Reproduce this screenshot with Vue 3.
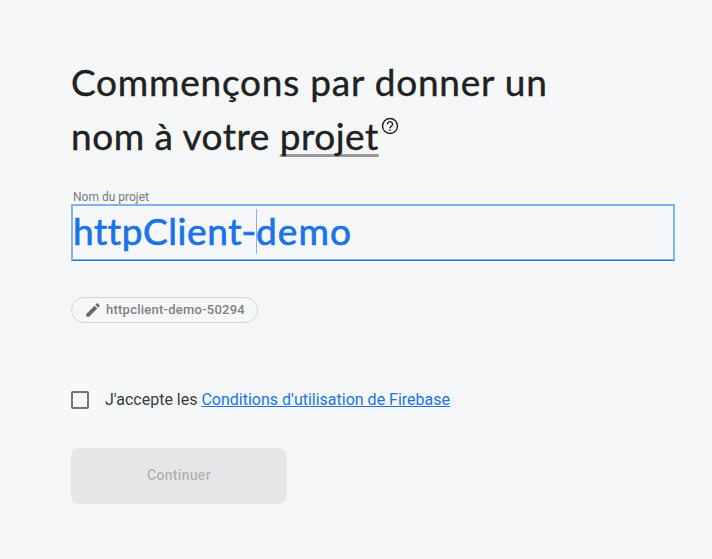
<script setup>
import { ref } from 'vue'
const before = ref('httpClient')
const after = ref('demo')
const projectId = ref('httpclient-demo-50294')
</script>

<template>
  <main class="page">
    <h1 class="title">
      <span class="line first">Commençons par donner un</span>
      <span class="line second"><span class="words">nom à votre </span><span class="term">projet</span><svg class="help" viewBox="0 0 18 18" aria-hidden="true"><circle cx="9" cy="9" r="7.5" /><path d="M6.5 7.2a2.5 2.5 0 1 1 4.2 1.8C9.7 9.8 9 10 9 11.2" /><path d="M9 12.3v1.4" /></svg></span>
    </h1>
    <label class="label">Nom du projet</label>
    <div class="field"><span class="before">{{ before }}<span class="hyphen">-</span></span><i class="caret"></i><span class="after">{{ after }}</span></div>
    <div class="chip">
      <svg class="pencil" viewBox="0 0 24 24" aria-hidden="true"><path d="M3 17.25V21h3.75L17.81 9.94l-3.75-3.75L3 17.25zM20.71 7.04a1 1 0 0 0 0-1.41l-2.34-2.34a1 1 0 0 0-1.41 0l-1.83 1.83 3.75 3.75 1.83-1.83z" /></svg>
      <span class="id">{{ projectId }}</span>
    </div>
    <div class="terms">
      <span class="box"></span>
      <span class="accept">J'accepte les <a class="link">Conditions d'utilisation de Firebase</a></span>
    </div>
    <button class="continue" disabled>Continuer</button>
  </main>
</template>

<style>
body { background: #f6f7f9; }
</style>

<style scoped>
.page {
  box-sizing: border-box;
  height: 559px;
  padding: 55px 37px 0 71px;
  display: flex;
  flex-direction: column;
  align-items: flex-start;
  background: #f6f7f9;
  font-family: Roboto, "Liberation Sans", sans-serif;
}
.title {
  margin: 0;
  font: 400 37px/54px Lato, "Open Sans", sans-serif;
  color: #212121;
  -webkit-text-stroke: 0.4px #212121;
}
.line { display: flex; height: 54px; white-space: pre; }
.first { letter-spacing: 0.77px; }
.second { letter-spacing: 0.5px; }
.term {
  text-decoration: underline #999;
  text-decoration-thickness: 3px;
  text-underline-offset: 4px;
  text-decoration-skip-ink: none;
}
.help { width: 18px; height: 18px; margin: 8px 0 0 2px; fill: none; stroke: #212121; stroke-width: 1.4; }
.label { margin-top: 26px; padding-left: 2px; height: 15px; font-size: 12px; line-height: 16px; color: #77787b; }
.field {
  box-sizing: border-box;
  display: flex;
  width: 604px;
  height: 57px;
  border: 2px solid #82b2f2;
  border-bottom-width: 1px;
  box-shadow: inset 0 -1px #82b2f2;
  border-bottom-color: #1a73e8;
  font: 400 37px/49px Lato, "Open Sans", sans-serif;
  color: #1a73e8;
  -webkit-text-stroke: 0.7px #1a73e8;
}
.before { display: flex; letter-spacing: 0.6px; width: 183px; }
.hyphen { transform: scaleX(1.1); }
.after { letter-spacing: 1.1px; margin-left: -1px; }
.caret { width: 1px; height: 45px; margin-top: 3px; background: #82b2f2; }
.chip {
  box-sizing: border-box;
  display: flex;
  align-items: center;
  width: 187px;
  height: 26px;
  margin-top: 36px;
  padding: 0 0 1px 12px;
  border: 1px solid #d5d7d9;
  border-radius: 13px;
  font-size: 13px;
  font-weight: 500;
  letter-spacing: 0.24px;
  color: #808183;
}
.pencil { width: 18px; height: 18px; margin: 1px 4px 0 0; fill: #6b6c6e; }
.id { white-space: nowrap; }
.terms { display: flex; align-items: center; height: 24px; margin-top: 65px; font-size: 16px; color: #3b3c3e; }
.box { box-sizing: border-box; width: 18px; height: 18px; margin-right: 16px; border: 2px solid #737476; border-radius: 2px; }
.accept { white-space: pre; padding-bottom: 2px; }
.link { color: #1a73e8; text-decoration: underline; }
.continue {
  width: 216px;
  height: 56px;
  margin-top: 36px;
  padding: 0 0 2px;
  border: 0;
  border-radius: 8px;
  background: #e7e7e9;
  font: 500 14px Roboto, sans-serif;
  letter-spacing: 0.3px;
  color: #b2b3b5;
}
</style>
